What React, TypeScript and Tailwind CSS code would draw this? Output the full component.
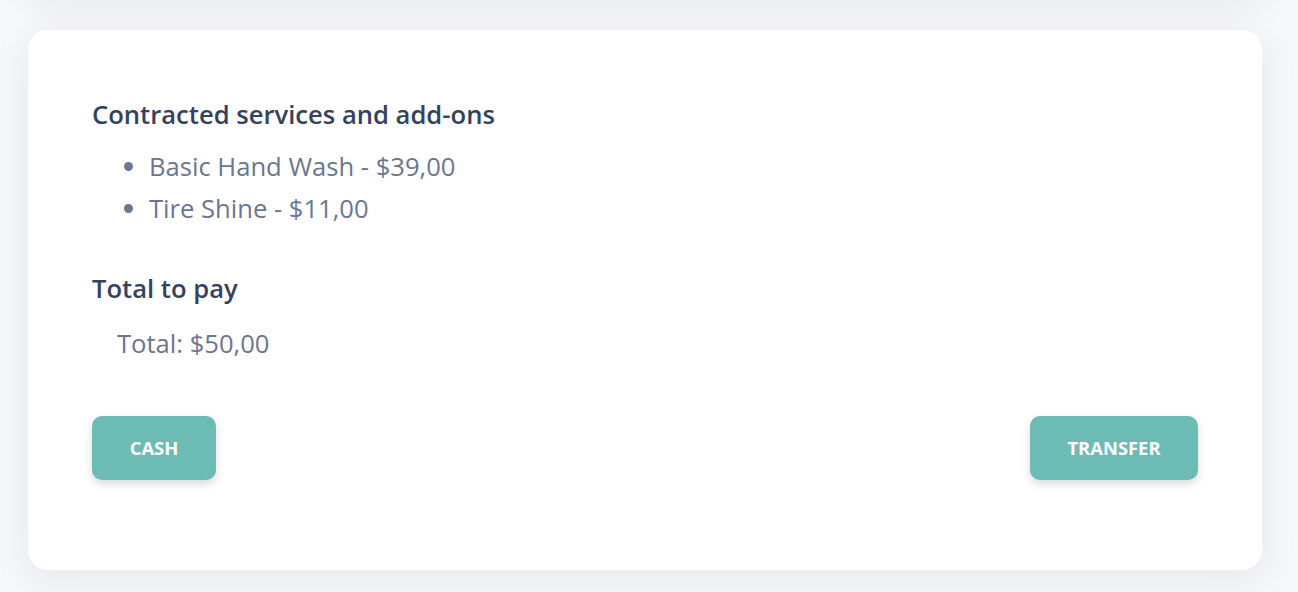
import React from "react";

export default function App() {
  return (
    <div
      className="min-h-[592px] w-full overflow-hidden bg-[#f7f8fa] pl-[28px] pr-[36px]"
      style={{ fontFamily: '"Open Sans", "Noto Sans", sans-serif' }}
    >
      <div className="flex flex-col gap-[40px]">
        <div className="-mt-[110px] h-[100px] rounded-[20px] bg-white shadow-[0_8px_40px_rgba(20,30,60,0.10)]" />
        <div className="rounded-[20px] bg-white px-[64px] pt-[68px] pb-[90px] shadow-[0_8px_40px_rgba(20,30,60,0.08)]">
          <h2 className="text-[25.6px] leading-[34px] font-semibold text-[#34425e]">
            Contracted services and add-ons
          </h2>
          <ul className="mt-[14px] list-disc pl-[57px] text-[25.6px] leading-[42px] text-[#6b7690] marker:text-[#6b7690]">
            <li>Basic Hand Wash - $39,00</li>
            <li>Tire Shine - $11,00</li>
          </ul>
          <h2 className="mt-[42px] text-[25.6px] leading-[34px] font-semibold text-[#34425e]">
            Total to pay
          </h2>
          <p className="mt-[21px] pl-[25px] text-[25.6px] leading-[34px] text-[#6b7690]">
            Total: $50,00
          </p>
          <div className="mt-[55px] flex items-center justify-between">
            <button className="h-[64px] w-[124px] rounded-[10px] bg-[#6cbbb4] text-[18.4px] font-bold text-white shadow-[0_4px_10px_rgba(0,0,0,0.15)]">
              CASH
            </button>
            <button className="h-[64px] w-[168px] rounded-[10px] bg-[#6cbbb4] text-[18.4px] font-bold text-white shadow-[0_4px_10px_rgba(0,0,0,0.15)]">
              TRANSFER
            </button>
          </div>
        </div>
      </div>
    </div>
  );
}
